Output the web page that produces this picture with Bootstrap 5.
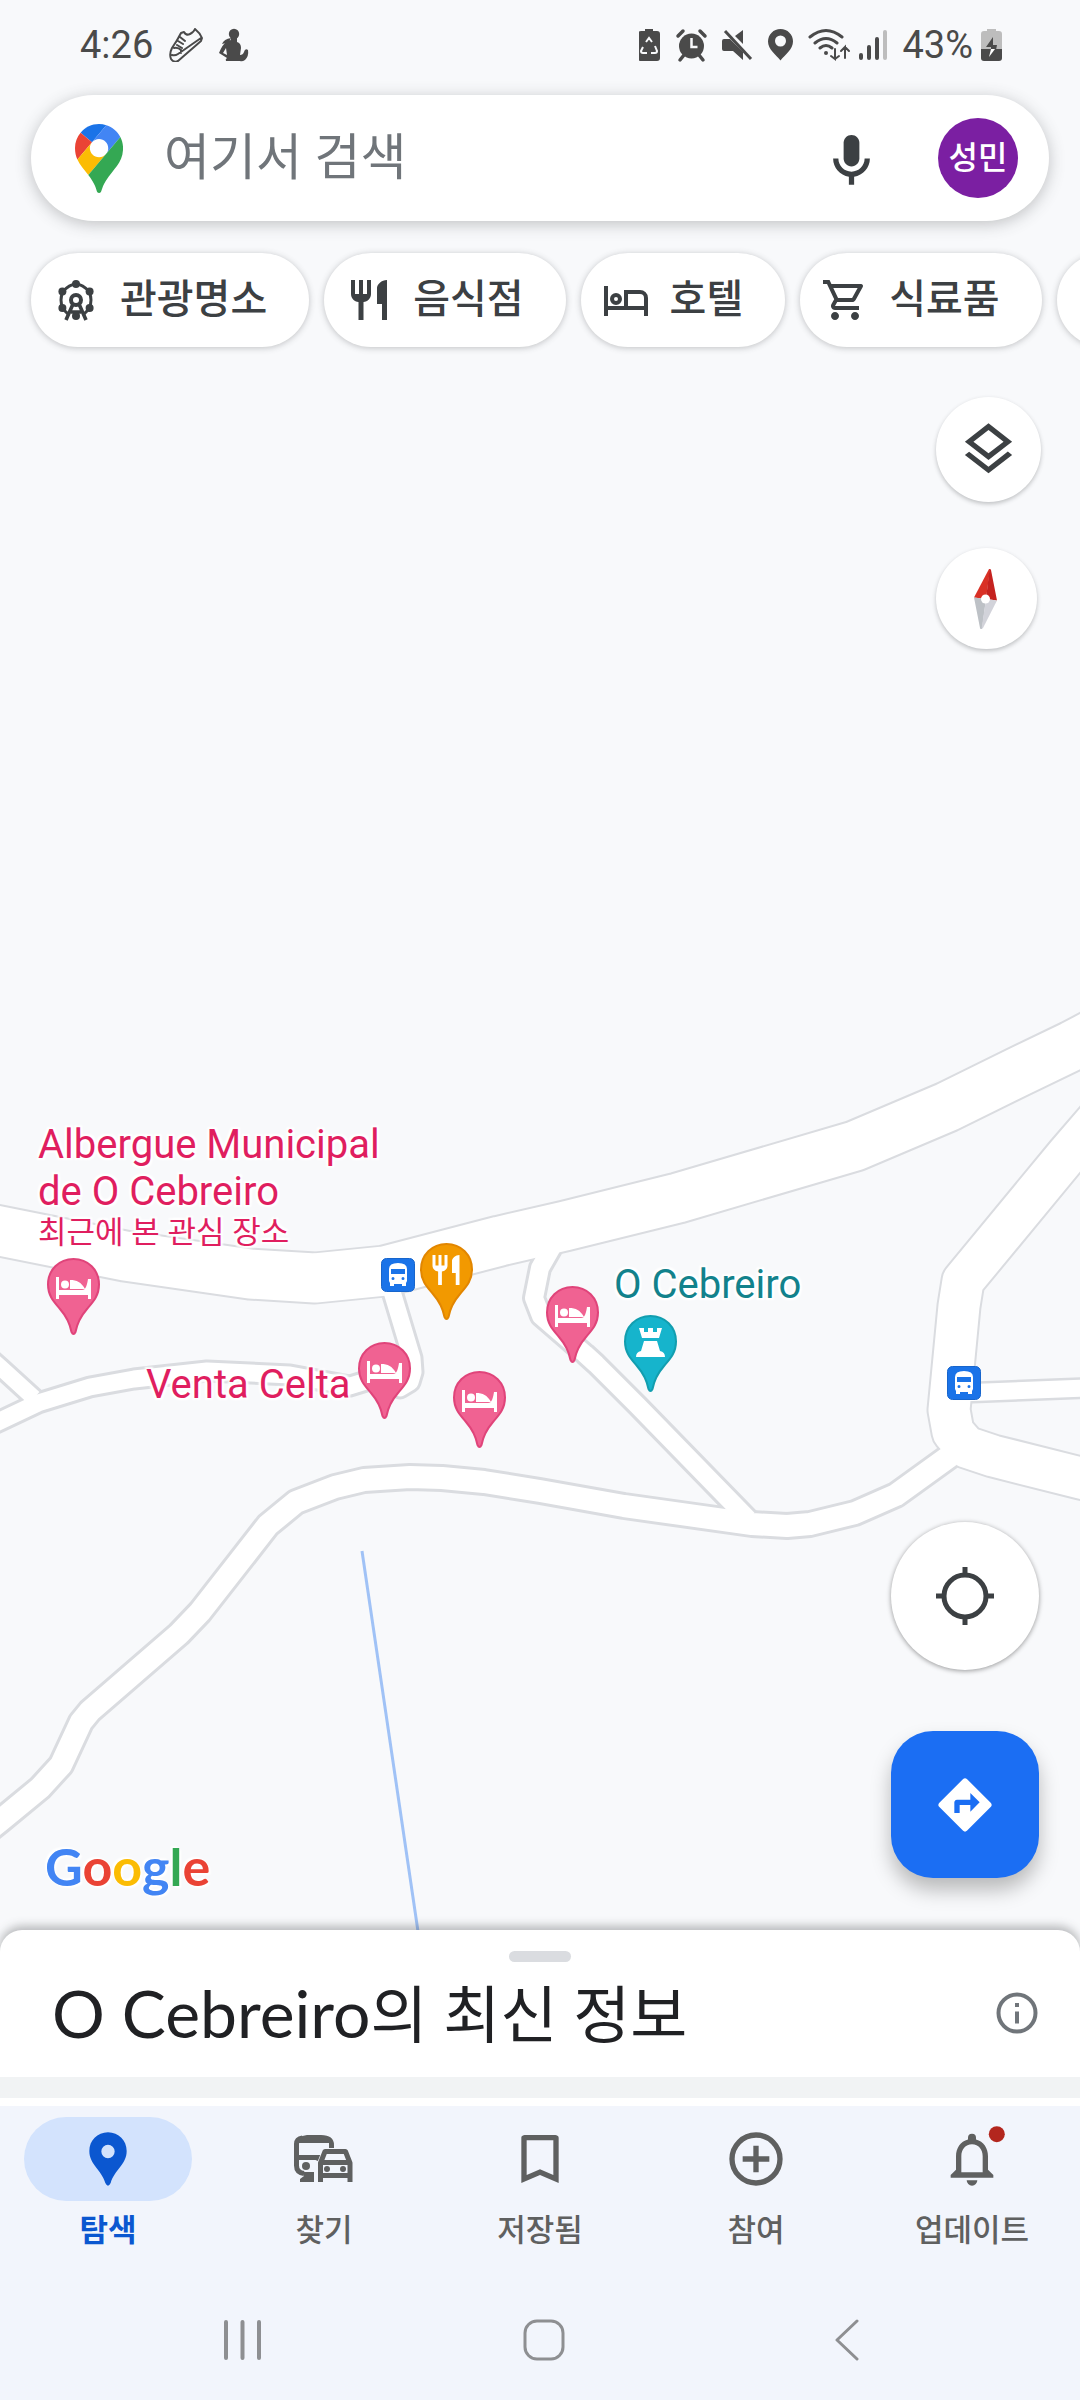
<!DOCTYPE html>
<html lang="ko">
<head>
<meta charset="utf-8">
<meta name="viewport" content="width=device-width, initial-scale=1">
<title>지도</title>
<link href="https://cdn.jsdelivr.net/npm/bootstrap@5.3.0/dist/css/bootstrap.min.css" rel="stylesheet">
<style>
:root{--ink:#3c4043;--grey:#5f6060;--pink:#e01e5f;--ground:#f8f9fb}
body{font-family:Roboto,"Noto Sans CJK KR",sans-serif;background:#f2f5fc;color:#202124}
button{border:0;background:none;padding:0}
svg{display:block;flex:none}
.map-area{background:var(--ground);margin-bottom:-22px}
.roads{inset:0;width:100%;height:100%}
.status{height:95px;padding:0 78px 28px 80px;font-size:38px;line-height:44px;color:#4a4a4a}
.search-bar{height:126px;margin:0 31px;padding:0 31px 0 44px;background:#fff;border-radius:63px;box-shadow:0 3px 16px rgba(60,64,67,.3)}
.search-bar input{font-size:50px;line-height:60px;margin-left:41px;color:var(--ink)}
.search-bar input::placeholder{color:#70757a;opacity:1}
.avatar-dot{width:80px;height:80px;margin-left:55px;background:#7b1fa2;color:#fff;font-size:32px;font-weight:500}
.chips{gap:15px;padding:0 31px;margin-top:32px}
.chip{height:94px;padding:0 42px 0 21px;gap:20px;border-radius:47px;background:#fff;color:var(--ink);font-size:40px;font-weight:500;line-height:48px;white-space:nowrap;box-shadow:0 1px 6px rgba(60,64,67,.3);flex:none}
.chip-more{width:200px}
.tools{margin:50px 39px 0 0;gap:46px}
.tool{width:105px;height:105px;background:#fff;box-shadow:0 2px 4px rgba(60,64,67,.3)}
.tool-compass{width:101px;height:101px}
.map-foot{padding:0 41px 53px 45px}
.fabs{gap:61px;margin-bottom:21px}
.fab-locate{width:148px;height:148px;background:#fff;box-shadow:0 1px 5px rgba(0,0,0,.4)}
.fab-route{width:148px;height:147px;border-radius:42px;background:#1b6ef3;box-shadow:0 12px 20px rgba(0,0,0,.26)}
.brand-word{font-family:Lato,sans-serif;font-weight:700;font-size:52px;line-height:66px;text-shadow:0 0 3px #fff,2px 2px 2px #fff,-2px -2px 2px #fff}
.g-blue{color:#4285f4}.g-red{color:#ea4335}.g-yellow{color:#fbbc04}.g-green{color:#34a853}
.poi{color:var(--pink);font-size:40px;line-height:47px;white-space:nowrap;text-shadow:0 0 3px #fff,2px 2px 2px #fff,-2px -2px 2px #fff,2px -2px 2px #fff,-2px 2px 2px #fff}
.poi small{display:block;font-size:31px;line-height:36px}
.poi-teal{color:#12828c}
.poi-a{left:38px;top:1121px}.poi-b{left:146px;top:1361px}.poi-c{left:614px;top:1261px}
.sheet{background:#fff;border-radius:22px 22px 0 0;box-shadow:0 -4px 10px rgba(60,64,67,.35);padding-top:21px}
.grip{width:62px;height:11px;border-radius:6px;background:#dadce0}
.sheet-row{height:115px;padding:0 32px 13px 52px}
.sheet-row h1{font-family:Lato,"Noto Sans CJK KR",sans-serif;font-size:66px;line-height:80px;font-weight:400}
.sheet-row h1 span{font-size:62px;line-height:60px}
.band{height:21px;background:#f1f3f4;margin-bottom:8px}
.bottom{background:#f2f5fc}
.tabs{padding-top:11px;height:174px}
.tab{color:var(--grey);font-size:31px;line-height:40px;font-weight:500;text-decoration:none;gap:10px}
.tab-pill{width:168px;height:84px;border-radius:42px}
.tab.active{color:#0b57d0;font-weight:700}
.tab.active .tab-pill{background:#d3e3fd}
.sysnav{height:120px;padding:0 82px 0 91px}
</style>
</head>
<body>
<svg width="0" height="0" class="position-absolute" aria-hidden="true">
  <defs>
    <path id="pin" d="M26.500 1C12 1 1 12 1 26.500C1 38 7 44 13 51C20 59 23 66 24.500 74Q26.500 78 28.500 74C30 66 33 59 40 51C46 44 52 38 52 26.500C52 12 41 1 26.500 1Z" stroke-width="2"/>
    <path id="bed" fill="#fff" d="M9 19h3v13h23c4 0 5-5 6-11h3v20h-3v-4H12v4H9zM14 26.500a4 4 0 1 0 8 0a4 4 0 1 0-8 0M23 22c7 0 11 2 15 9H23z"/>
    <g id="bus"><rect x=".5" y=".5" width="33" height="33" rx="5" fill="#1a73e8" stroke="#1765cc"/><path fill="#fff" fill-rule="evenodd" d="M8 11q0-6 9-6t9 6v12l-1 2v3h-4v-2h-8v2H9v-3l-1-2zM10 11v5h14v-5zM10.500 20.500a1.500 1.500 0 1 0 3 0a1.500 1.500 0 1 0-3 0M20.500 20.500a1.500 1.500 0 1 0 3 0a1.500 1.500 0 1 0-3 0"/></g>
    <path id="fork" d="M11 9H9V2H7v7H5V2H3v7c0 2.120 1.660 3.840 3.750 3.970V22h2.500v-9.030C11.340 12.840 13 11.120 13 9V2h-2v7zm5-3v8h2.500v8H21V2c-2.760 0-5 2.240-5 4z"/>
  </defs>
</svg>

<div class="d-flex flex-column min-vh-100 overflow-hidden">
<main class="map-area position-relative flex-grow-1 d-flex flex-column">
  <svg class="roads position-absolute" viewBox="0 0 1080 1952" preserveAspectRatio="xMinYMin slice" role="img" aria-label="O Cebreiro 지도">
    <defs>
      <path id="r-main" d="M-20 1227L0 1231L125 1256L250 1274L315 1278L385 1271L500 1241L565 1226L678 1198L855 1146L947 1107L1018 1072L1072 1046L1110 1026"/>
      <path id="r-east" d="M1110 1105L1067 1155L963 1281L959 1306L949 1410L953 1432L966 1447L993 1456L1080 1478L1110 1485"/>
      <path id="r-spur" d="M960 1393L1110 1387"/>
      <path id="r-south" d="M-30 1845L0 1821L40 1788L61 1765L81 1722L90 1711L179 1634L200 1612L268 1525L296 1502L335 1487L364 1480L410 1477L442 1478L484 1482L540 1491L624 1506L752 1524L787 1526L810 1524L855 1513L896 1495L950 1456"/>
      <path id="r-diag" d="M556 1240L540 1268L534 1298L541 1316L585 1354L596 1364L638 1406L748 1519"/>
      <path id="r-venta" d="M390 1285L412 1358L413 1372L410 1382L400 1388L376 1378L350 1386L290 1375L207 1371L134 1379L90 1387L38 1403L0 1421L-20 1431"/>
      <path id="r-west" d="M-20 1349L0 1367L34 1398"/>
    </defs>
    <g fill="none" stroke="#dadce0" stroke-linejoin="round">
      <use href="#r-main" stroke-width="53"/><use href="#r-east" stroke-width="45"/><use href="#r-spur" stroke-width="22"/><use href="#r-south" stroke-width="28"/><use href="#r-diag" stroke-width="24"/><use href="#r-venta" stroke-width="23"/><use href="#r-west" stroke-width="22"/>
    </g>
    <g fill="none" stroke="#fff" stroke-linejoin="round">
      <use href="#r-main" stroke-width="49"/><use href="#r-east" stroke-width="41"/><use href="#r-spur" stroke-width="17"/><use href="#r-south" stroke-width="22"/><use href="#r-diag" stroke-width="18"/><use href="#r-venta" stroke-width="17"/><use href="#r-west" stroke-width="16"/>
    </g>
    <path d="M362 1551L420 1945" stroke="#a0c2f6" stroke-width="3"/>
    <g fill="#f06292" stroke="#e0447a">
      <g transform="translate(47 1258)"><use href="#pin"/><use href="#bed" stroke="none"/></g>
      <g transform="translate(358 1342)"><use href="#pin"/><use href="#bed" stroke="none"/></g>
      <g transform="translate(453 1371)"><use href="#pin"/><use href="#bed" stroke="none"/></g>
      <g transform="translate(546 1286)"><use href="#pin"/><use href="#bed" stroke="none"/></g>
    </g>
    <g transform="translate(381 1258)"><use href="#bus"/></g>
    <g transform="translate(947 1366)"><use href="#bus"/></g>
    <g transform="translate(420 1243)" fill="#f29900" stroke="#e28600"><use href="#pin"/><g transform="translate(8 9) scale(1.500)" fill="#fff" stroke="none"><use href="#fork"/></g></g>
    <g transform="translate(624 1315)" fill="#16b4cc" stroke="#129eaf"><use href="#pin"/><path stroke="none" fill="#fff" d="M15 13h5v4h4v-4h5v4h4v-4h5l-3 10H18zM20 26h13l3 10q5 1 5 6H12q0-5 5-6z"/></g>
  </svg>

  <div class="poi poi-a position-absolute">Albergue Municipal<br>de O Cebreiro<small>최근에 본 관심 장소</small></div>
  <div class="poi poi-b position-absolute">Venta Celta</div>
  <div class="poi poi-teal poi-c position-absolute">O Cebreiro</div>

  <header class="status position-relative d-flex align-items-end justify-content-between">
    <div class="d-flex align-items-center">
      <span>4:26</span>
      <svg class="ms-3" width="80" height="34" viewBox="0 0 80 34" fill="none" stroke="#4a4a4a" stroke-width="2" stroke-linejoin="round" stroke-linecap="round">
        <path d="M2 31q-2-5 1-11q5-7 9-15l3-1q2 4 6 2q4-2 5-5q5 4 7 9l-1 3L9 33q-4 2-7-2zM3 27q3 1 6-1L32 10M5 20q4-1 7 2v3M9 13l5 3M11 9l5 4M8 17l5 3"/>
        <g fill="#4a4a4a" stroke="none"><circle cx="65" cy="6" r="5.200"/><path d="M62 10q-1 4-5 5l-4 1q2-5 9-6z"/><path fill-rule="evenodd" d="M62 10h6v4q4 1 4 6l-1 7q3 0 4-3q1-4 4-2q1 6-3 10q-3 2-5 1H57q-1-2 1-3l-8-5q3-8 8-12l4-1zM57 20l-3 5 4 2z"/></g>
      </svg>
    </div>
    <div class="d-flex align-items-center">
      <svg width="259" height="36" viewBox="639 27 259 36" fill="#4a4a4a">
        <path d="M645 31v-2h8v2h4q3 0 3 3v24q0 3-3 3h-16q-3 0-3-3V34q0-3 3-3z"/><path d="M646 42l3-4 3 4M655 46l2 5q0 2-2 2h-4M647 53h-4q-2 0-2-2l2-4" fill="none" stroke="#f8f9fb" stroke-width="2"/>
        <circle cx="691.500" cy="46" r="12.500"/><path d="M678 36l5-5M705 36l-5-5M684 55l-4 5M699 55l4 5" stroke="#4a4a4a" stroke-width="3.500" stroke-linecap="round"/><path d="M691.500 38v9h6" stroke="#f8f9fb" stroke-width="2.500" fill="none"/>
        <path d="M743 30v14l-8-8zM724 39h6l13 13v8l-10-9h-9q-2 0-2-2v-8q0-2 2-2z"/><path d="M725 31l26 28" stroke="#4a4a4a" stroke-width="3"/>
        <path fill-rule="evenodd" d="M780.500 29c-7 0-12.500 5.500-12.500 12.500 0 8 8 13 12.500 19 4.500-6 12.500-11 12.500-19 0-7-5.500-12.500-12.500-12.500zm0 6.500a5.500 5.500 0 1 1 0 11a5.500 5.500 0 1 1 0-11"/>
        <g fill="none" stroke="#4a4a4a" stroke-width="3" stroke-linecap="round"><path d="M810 37q16-13 32 0M815 43q11-9 22 0M820 48q6-5 12 0"/><path stroke-width="2" d="M835 49v10l-4-3M835 59l4-3M845 58V47l-4 4M845 47l4 4"/><path stroke-width="4" d="M861 55v3M869 47v11M877 39v19"/><path stroke-width="4" stroke="#bdbdbd" d="M885 32v26"/></g><circle cx="826" cy="53" r="2"/>
      </svg>
      <span class="ms-1">43%</span>
      <svg class="ms-2" width="21" height="34" viewBox="0 0 21 34"><path fill="#bdbdbd" d="M6 3V1h9v2h3q3 0 3 3v15H0V6q0-3 3-3z"/><path fill="#4a4a4a" d="M0 21h21v9q0 3-3 3H3q-3 0-3-3z"/><path fill="#4a4a4a" d="M12 9L5 19h5v3h5l1-5h-4z"/><path fill="#fff" d="M10 21h4l-6 8z"/></svg>
    </div>
  </header>

  <form class="search-bar position-relative d-flex align-items-center" role="search">
    <svg width="48" height="69" viewBox="0 0 92.300 132.300"><path fill="#1a73e8" d="M60.200 2.200C55.800.8 51 0 46.100 0 32 0 19.300 6.400 10.800 16.500l21.800 18.300L60.200 2.200z"/><path fill="#ea4335" d="M10.800 16.500C4.100 24.500 0 34.900 0 46.100c0 8.700 1.700 15.700 4.600 22l28-33.300-21.800-18.300z"/><path fill="#4285f4" d="M46.200 28.500c9.800 0 17.700 7.900 17.700 17.700 0 4.300-1.600 8.300-4.200 11.400 0 0 13.900-16.600 27.500-32.700-5.600-10.800-15.300-19-27-22.700L32.600 34.800c3.300-3.800 8.100-6.300 13.600-6.300"/><path fill="#fbbc04" d="M46.200 63.800c-9.800 0-17.700-7.900-17.700-17.700 0-4.300 1.500-8.300 4.100-11.300l-28 33.300c4.800 10.600 12.800 19.200 21 29.900l34.100-40.500c-3.300 3.900-8.100 6.300-13.500 6.300"/><path fill="#34a853" d="M59.100 109.200c15.400-24.100 33.300-35 33.300-63 0-7.700-1.900-14.900-5.200-21.300L25.600 98c2.600 3.400 5.300 7.300 7.900 11.300 9.400 14.500 6.800 23.100 12.800 23.100s3.400-8.700 12.800-23.200"/></svg>
    <input class="form-control border-0 bg-transparent shadow-none p-0 flex-grow-1" type="text" placeholder="여기서 검색" aria-label="여기서 검색">
    <button type="button" aria-label="음성 검색"><svg width="63" height="63" viewBox="0 -1 24 24" fill="#3c4043"><path d="M12 14c1.660 0 3-1.340 3-3V5c0-1.660-1.340-3-3-3S9 3.340 9 5v6c0 1.660 1.340 3 3 3z"/><path d="M17 11c0 2.760-2.240 5-5 5s-5-2.240-5-5H5c0 3.530 2.610 6.430 6 6.920V21h2v-3.080c3.390-.49 6-3.390 6-6.920h-2z"/></svg></button>
    <button type="button" class="avatar-dot rounded-circle flex-shrink-0">성민</button>
  </form>

  <nav class="chips position-relative d-flex" aria-label="카테고리">
    <button class="chip d-flex align-items-center"><svg width="48" height="48" viewBox="0 0 24 24" fill="#3c4043"><path fill="none" stroke="#3c4043" stroke-width="1.500" d="M12 4Q15.500 4.200 18.500 7.800Q20.500 12 18.500 16.500M5.500 16.500Q3.500 12 5.500 7.800Q8.500 4.200 12 4M5.500 16.500L8 19M18.500 16.500L16 19"/><circle cx="12" cy="4" r="2"/><circle cx="18.800" cy="7.800" r="2"/><circle cx="18.800" cy="16" r="2"/><circle cx="5.200" cy="7.800" r="2"/><circle cx="5.200" cy="16" r="2"/><circle cx="12" cy="20" r="2"/><circle cx="12" cy="12" r="2.500" fill="none" stroke="#3c4043" stroke-width="2"/><path d="M10.500 14L7 22M13.500 14L17 22M9.500 18h5" fill="none" stroke="#3c4043" stroke-width="1.800"/></svg>관광명소</button>
    <button class="chip d-flex align-items-center"><svg width="48" height="48" viewBox="0 0 24 24" fill="#3c4043"><use href="#fork"/></svg>음식점</button>
    <button class="chip d-flex align-items-center"><svg width="48" height="48" viewBox="0 0 24 24" fill="none" stroke="#3c4043" stroke-width="2"><path d="M2 5v15M22 20v-9a3 3 0 0 0-3-3h-7v8M2 16h20"/><circle cx="7" cy="11.500" r="2"/></svg>호텔</button>
    <button class="chip d-flex align-items-center"><svg width="48" height="48" viewBox="0 0 24 24" fill="#3c4043"><path d="M15.550 13c.75 0 1.410-.41 1.750-1.030l3.580-6.490A.996.996 0 0020.010 4H5.210l-.94-2H1v2h2l3.600 7.590-1.350 2.440C4.520 15.370 5.480 17 7 17h12v-2H7l1.100-2h7.450zM6.160 6h12.150l-2.760 5H8.530L6.160 6zM7 18c-1.100 0-1.990.9-1.990 2S5.900 22 7 22s2-.9 2-2-.9-2-2-2zm10 0c-1.100 0-1.990.9-1.990 2s.89 2 1.990 2 2-.9 2-2-.9-2-2-2z"/></svg>식료품</button>
    <button class="chip chip-more" aria-label="더보기"></button>
  </nav>

  <div class="tools position-relative align-self-end d-flex flex-column align-items-start">
    <button class="tool rounded-circle d-flex align-items-center justify-content-center" aria-label="레이어"><svg width="63" height="63" viewBox="0 0 24 24" fill="#3c4043"><path d="M11.990 18.540l-7.370-5.730L3 14.070l9 7 9-7-1.630-1.270-7.380 5.740zM12 16l7.360-5.730L21 9l-9-7-9 7 1.630 1.270L12 16zm0-11.470L17.740 9 12 13.470 6.260 9 12 4.530z"/></svg></button>
    <button class="tool tool-compass rounded-circle d-flex align-items-center justify-content-center" aria-label="나침반"><svg width="26" height="60" viewBox="0 0 26 60"><path fill="#d93025" d="M15 0h1L12 30L0 28.500z"/><path fill="#c5221f" d="M15.500 0Q17 0 17 1L23 31.500L12 30z"/><path fill="#bdc1c6" d="M0 28.500L12 30L8 60H7Q6 60 6 59z"/><path fill="#d2d3da" d="M12 30L23 31.500L9 59L7.500 60z"/><circle cx="11.500" cy="30" r="4.500" fill="#fff"/></svg></button>
  </div>

  <div class="map-foot position-relative mt-auto d-flex align-items-end justify-content-between">
    <div class="brand-word" aria-label="Google"><span class="g-blue">G</span><span class="g-red">o</span><span class="g-yellow">o</span><span class="g-blue">g</span><span class="g-green">l</span><span class="g-red">e</span></div>
    <div class="fabs d-flex flex-column">
      <button class="fab-locate rounded-circle d-flex align-items-center justify-content-center" aria-label="내 위치"><svg width="58" height="58" viewBox="0 0 58 58" fill="none" stroke="#3c4043" stroke-width="5"><circle cx="29" cy="29" r="21"/><path d="M29 0v8M29 50v8M0 29h8M50 29h8"/></svg></button>
      <button class="fab-route d-flex align-items-center justify-content-center" aria-label="경로"><svg width="64" height="64" viewBox="0 0 24 24" fill="#fff"><path d="M21.710 11.290l-9-9c-.39-.39-1.020-.39-1.410 0l-9 9c-.39.39-.39 1.020 0 1.410l9 9c.39.39 1.020.39 1.410 0l9-9c.39-.38.39-1.010 0-1.410zM14 14.500V12h-4v3H8v-4c0-.55.45-1 1-1h5V7.500l3.500 3.500-3.500 3.500z"/></svg></button>
    </div>
  </div>
</main>

<section class="sheet position-relative">
  <div class="grip mx-auto"></div>
  <div class="sheet-row d-flex align-items-center justify-content-between">
    <h1 class="m-0">O Cebreiro<span>의 최신 정보</span></h1>
    <button aria-label="정보"><svg width="63" height="50" viewBox="0 0 63 50" fill="none" stroke="#70757a" stroke-width="4"><circle cx="32" cy="25" r="18.500"/><path d="M32 23.500v12M32 15v4"/></svg></button>
  </div>
  <div class="band"></div>
</section>

<footer class="bottom position-relative">
  <nav class="tabs d-flex">
    <a href="#" class="tab active col d-flex flex-column align-items-center" aria-current="page"><span class="tab-pill d-flex align-items-center justify-content-center"><svg width="64" height="64" viewBox="0 0 24 24" fill="#0b57d0"><path fill-rule="evenodd" d="M12 2C8 2 5 5.100 5 9c0 5 4.500 7 6 12q1 2 2 0c1.500-5 6-7 6-12 0-3.900-3-7-7-7zm0 4.700a2.500 2.500 0 1 1 0 5a2.500 2.500 0 1 1 0-5"/></svg></span>탐색</a>
    <a href="#" class="tab col d-flex flex-column align-items-center"><span class="tab-pill d-flex align-items-center justify-content-center"><svg width="64" height="64" viewBox="0 0 64 64" fill="none" stroke="#5f6060" stroke-width="5"><path d="M12 46.500q-7.500-1-7.500-8V17q0-5 6-6M4.500 30.500h20l-1 2.500"/><path d="M3 16q2-7 12-8h14q13 0 13 10v3h-5v-5z" fill="#5f6060" stroke="none"/><path d="M11 45h11v10H8v-3l4-3z" fill="#5f6060" stroke="none"/><path d="M28.500 55V36L33 24.500h20.500L58 36V55M28 35.500h30M28 48.500h30" stroke-linejoin="round"/><g fill="#5f6060" stroke="none"><circle cx="14" cy="39" r="4"/><circle cx="35" cy="42" r="3"/><circle cx="51" cy="42" r="3"/></g></svg></span>찾기</a>
    <a href="#" class="tab col d-flex flex-column align-items-center"><span class="tab-pill d-flex align-items-center justify-content-center"><svg width="64" height="64" viewBox="0 0 24 24" fill="#5f6060"><path d="M17 3H7c-1.100 0-2 .2-2 1v17l7-3 7 3V4c0-.8-.9-1-2-1zm0 15l-5-2.180L7 18V5h10v13z"/></svg></span>저장됨</a>
    <a href="#" class="tab col d-flex flex-column align-items-center"><span class="tab-pill d-flex align-items-center justify-content-center"><svg width="64" height="64" viewBox="0 0 24 24" fill="none" stroke="#5f6060" stroke-width="2"><circle cx="12" cy="12" r="9"/><path d="M12 7v10M7 12h10"/></svg></span>참여</a>
    <a href="#" class="tab col d-flex flex-column align-items-center"><span class="tab-pill d-flex align-items-center justify-content-center"><svg width="64" height="64" viewBox="0 0 24 24" fill="#5f6060" overflow="visible"><path d="M10 20h4a2 2 0 0 1-4 0z"/><path fill-rule="evenodd" d="M20 19v-1l-2-2v-5c0-3.070-1.630-5.640-4.500-6.320V4a1.500 1.500 0 0 0-3 0v.68C7.640 5.360 6 7.920 6 11v5l-2 2v1zM16 17H8v-6c0-2.480 1.510-4.500 4-4.500s4 2.020 4 4.500z"/><circle cx="21.300" cy="2.700" r="3" fill="#b3261e"/></svg></span>업데이트</a>
  </nav>
  <div class="sysnav d-flex">
    <button class="col d-flex align-items-center justify-content-center" aria-label="최근 앱"><svg width="42" height="42" viewBox="0 0 42 42" stroke="#8e8f92" stroke-width="4" stroke-linecap="round"><path d="M5 3v36M21.500 3v36M38 3v36"/></svg></button>
    <button class="col d-flex align-items-center justify-content-center" aria-label="홈"><svg width="42" height="42" viewBox="0 0 42 42" fill="none" stroke="#8e8f92" stroke-width="3"><rect x="2" y="2" width="38" height="38" rx="12"/></svg></button>
    <button class="col d-flex align-items-center justify-content-center" aria-label="뒤로"><svg width="42" height="42" viewBox="0 0 42 42" fill="none" stroke="#8e8f92" stroke-width="3" stroke-linecap="round" stroke-linejoin="round"><path d="M31 2L11 21L31 40"/></svg></button>
  </div>
</footer>
</div>
<script src="https://cdn.jsdelivr.net/npm/bootstrap@5.3.0/dist/js/bootstrap.bundle.min.js"></script>
</body>
</html>
